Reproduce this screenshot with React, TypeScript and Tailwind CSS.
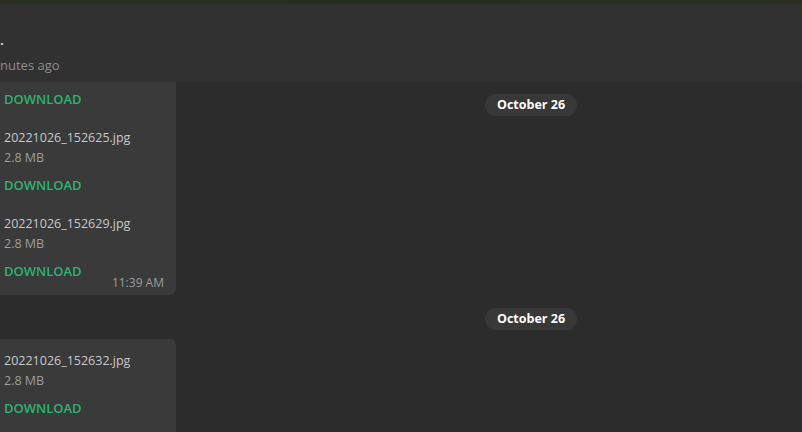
const files = [
  { name: "20221026_152625.jpg", size: "2.8 MB" },
  { name: "20221026_152629.jpg", size: "2.8 MB" },
];

function FileItem({ name, size, last }: { name: string; size: string; last?: boolean }) {
  return (
    <div className="mt-[19px]">
      <div className="text-[12.5px] leading-[20px] text-[#c8c8c8]">{name}</div>
      <div className="text-[12.5px] leading-[20px] text-[#9c9c9c]">{size}</div>
      {last ? (
        <div className="mt-[7px] flex justify-between pr-3">
          <span className="text-[13px] font-semibold leading-[20px] text-[#2db370]">DOWNLOAD</span>
          <span className="pt-[14px] text-[12px] leading-[16px] text-[#9a9a9a]">11:39 AM</span>
        </div>
      ) : (
        <div className="mt-[7px] text-[13px] font-semibold leading-[20px] text-[#2db370]">DOWNLOAD</div>
      )}
    </div>
  );
}

function DatePill() {
  return (
    <div className="rounded-full bg-[#383838] px-3 text-[12.5px] font-bold leading-[22px] text-white">
      October 26
    </div>
  );
}

export default function App() {
  return (
    <div
      className="flex h-[432px] w-[802px] flex-col overflow-hidden bg-[#2c2c2c]"
      style={{ fontFamily: '"Open Sans", "Noto Sans", sans-serif' }}
    >
      <div className="h-1 shrink-0 bg-gradient-to-r from-[#2a2f1e] via-[#263020] to-[#2a2f1e]" />
      <div className="flex h-[78px] shrink-0 flex-col bg-[#313131]">
        <div className="mt-[26px] text-[14px] font-semibold leading-[20px] text-[#e0e0e0]">.</div>
        <div className="mt-[5px] text-[13px] leading-[20px] text-[#8e8e8e]">nutes ago</div>
      </div>

      <div className="relative flex-1">
        <div className="absolute left-0 top-[12px] flex w-full justify-center pl-[260px]">
          <DatePill />
        </div>

        <div className="w-[176px] rounded-br-md bg-[#3a3a3a] pb-[4px] pl-1 pt-[7px]">
          <div className="text-[13px] font-semibold leading-[20px] text-[#2db370]">DOWNLOAD</div>
          {files.map((f, i) => (
            <FileItem key={f.name} name={f.name} size={f.size} last={i === files.length - 1} />
          ))}
        </div>

        <div className="mb-[9px] mt-[13px] flex justify-center pl-[260px]">
          <DatePill />
        </div>

        <div className="w-[176px] rounded-tr-md bg-[#3a3a3a] pb-4 pl-1 pt-[12px]">
          <div className="text-[12.5px] leading-[20px] text-[#c8c8c8]">20221026_152632.jpg</div>
          <div className="text-[12.5px] leading-[20px] text-[#9c9c9c]">2.8 MB</div>
          <div className="mt-[7px] text-[13px] font-semibold leading-[20px] text-[#2db370]">DOWNLOAD</div>
        </div>
      </div>
    </div>
  );
}
